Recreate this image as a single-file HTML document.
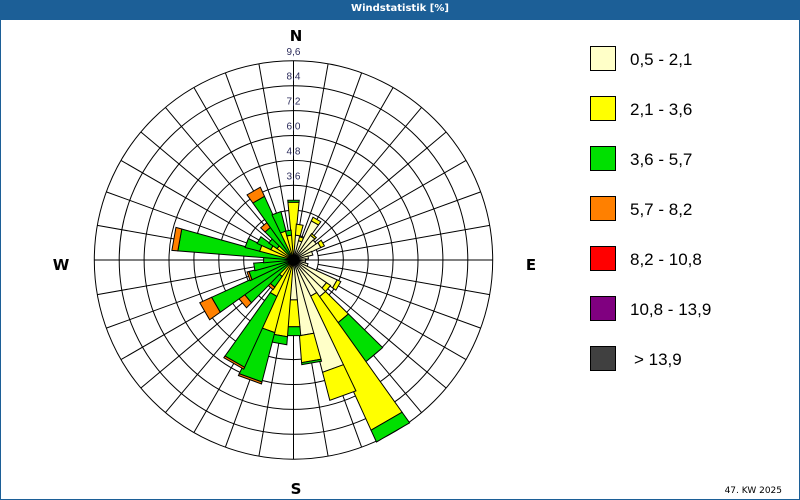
<!DOCTYPE html>
<html><head><meta charset="utf-8"><style>
body{margin:0;width:800px;height:500px;overflow:hidden;background:#fff;font-family:"Liberation Sans",sans-serif}
#f{position:absolute;left:0;top:0;width:798px;height:498px;border:1px solid #1c5f97;}
#t{position:absolute;left:0;top:0;width:800px;height:20px;background:#1c5f97;color:#fff;font:bold 10px "DejaVu Sans",sans-serif;text-align:center;line-height:18px}
</style></head><body>
<div id="f"></div>
<div id="t">Windstatistik [%]</div>
<svg id="s" width="800" height="500" style="position:absolute;left:0;top:0"></svg>
<script>
var cx=293.5,cy=260,S=24.9,svg=document.getElementById('s'),h='';
var C={L:'#ffffc8',Y:'#ffff00',G:'#00e000',O:'#ff8000'};
function p(r,a){a=(a-90)*Math.PI/180;return [cx+r*Math.cos(a),cy+r*Math.sin(a)];}
for(var a=0;a<360;a+=10){var q=p(S*8,a),q0=p(S,a);h+='<line x1="'+q0[0]+'" y1="'+q0[1]+'" x2="'+q[0]+'" y2="'+q[1]+'" stroke="#000" stroke-width="1"/>';}
for(var k=1;k<=8;k++)h+='<circle cx="'+cx+'" cy="'+cy+'" r="'+S*k+'" fill="none" stroke="#000" stroke-width="1"/>';
h+='<line x1="'+cx+'" y1="'+(cy-S*8)+'" x2="'+cx+'" y2="'+(cy+S*8)+'" stroke="#000"/>';
h+='<line x1="'+(cx-S*8)+'" y1="'+cy+'" x2="'+(cx+S*8)+'" y2="'+cy+'" stroke="#000"/>';
var D={0:'Y58 G60',10:'L25 Y36',20:'L20 Y24',30:'L43 Y47',40:'L30 Y32',50:'L28',60:'L30 Y34',70:'L20',80:'L15',90:'L12',100:'L12',110:'L15',120:'L48 Y52',130:'L40 Y45',140:'L45 Y77 G125',150:'L40 Y187 G200',160:'L116 Y145',170:'L76 Y103 G105',180:'L40 Y67 G76',190:'Y77 G85',200:'Y75 G126 O128',210:'Y40 G118 O120',220:'Y20 G33 O36',230:'G60 O67',240:'G90 O103',250:'G46 O48',260:'G40',270:'G30',280:'G116 O122',290:'Y35 G50',300:'Y25 G40',310:'Y20 G30',320:'G40 O46',330:'G70 O80',340:'Y30 G50',350:'Y25 G30'};
for(var a in D){var segs=D[a].split(' '),r0=0;a=+a;segs.forEach(function(s){var c=C[s[0]],r1=+s.slice(1);
var A=p(r0,a-5.5),B=p(r1,a-5.5),E=p(r1,a+5.5),F=p(r0,a+5.5);
h+='<polygon points="'+A+' '+B+' '+E+' '+F+'" fill="'+c+'" stroke="#000" stroke-width="1"/>';r0=r1;});}
var labs=['1,2','2,4','3,6','4,8','6,0','7,2','8,4','9,6'];
for(var k=3;k<=8;k++)h+='<text x="'+cx+'" y="'+(cy-S*k-6)+'" font-size="10" fill="#2a2a5a" text-anchor="middle" font-family="Liberation Sans">'+labs[k-1]+'</text>';
h+='<g font-family="DejaVu Sans" font-weight="bold" font-size="15" text-anchor="middle"><text x="296" y="41">N</text><text x="296" y="494">S</text><text x="61" y="270">W</text><text x="531" y="270">E</text></g>';
var L=[['#ffffc8','0,5 - 2,1'],['#ffff00','2,1 - 3,6'],['#00e000','3,6 - 5,7'],['#ff8000','5,7 - 8,2'],['#ff0000','8,2 - 10,8'],['#800080','10,8 - 13,9'],['#404040','&gt; 13,9']];
L.forEach(function(l,i){var y=46+i*50;h+='<rect x="590.5" y="'+(y+0.5)+'" width="25" height="24" fill="'+l[0]+'" stroke="#000"/><text x="'+(i==6?634:630)+'" y="'+(y+19)+'" font-size="17" font-family="Liberation Sans" fill="#000">'+l[1]+'</text>';});
h+='<text x="782" y="493" font-size="9" text-anchor="end" font-family="DejaVu Sans">47. KW 2025</text>';
svg.innerHTML=h;
</script>
</body></html>
